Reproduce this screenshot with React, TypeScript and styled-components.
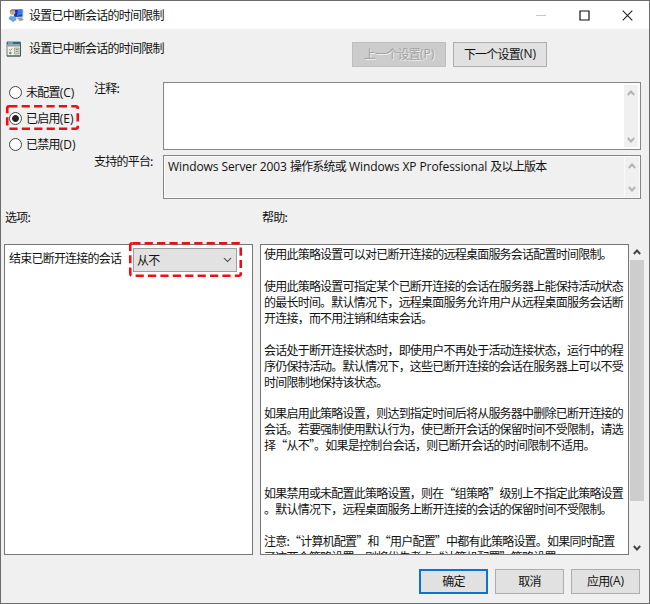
import React from "react";
import styled, { createGlobalStyle } from "styled-components";

const GlobalStyle = createGlobalStyle`
  * { box-sizing: border-box; }
  body { margin: 0; background: #f0f0f0; }
`;

const Dialog = styled.div`
  display: flex;
  flex-direction: column;
  width: 650px;
  height: 604px;
  overflow: hidden;
  border: 1px solid #6b6a6c;
  background: #f0f0f0;
  color: #111;
  font-family: "Noto Sans CJK SC", sans-serif;
  font-size: 12px;
  letter-spacing: -0.78px;
  line-height: 16px;
  white-space: nowrap;
`;

const Latin = styled.span<{ $spacing?: number }>`
  font-family: "Open Sans", "Noto Sans", sans-serif;
  letter-spacing: ${(p) => p.$spacing ?? 0}px;
  line-height: 1;
`;

const TitleBar = styled.header`
  display: flex;
  align-items: center;
  height: 28px;
  flex: none;
  padding-left: 7px;
  background: #fff;
`;

const TitleText = styled.span`
  flex: 1;
  margin-left: 4px;
`;

const WindowControls = styled.div`
  display: flex;
  gap: 32px;
  padding-right: 16px;
  svg { display: block; }
`;

const Header = styled.div`
  display: flex;
  align-items: flex-start;
  height: 53px;
  flex: none;
  padding: 13px 102px 0 5px;
`;

const HeaderTitle = styled.div`
  display: flex;
  flex: 1;
  gap: 7px;
  margin-top: -2px;
  svg { margin-top: 1px; }
`;

const Button = styled.button<{ $width: number; $kind?: "primary" | "disabled" }>`
  display: flex;
  align-items: center;
  justify-content: center;
  width: ${(p) => p.$width}px;
  height: 25px;
  padding: 0 0 1px;
  margin: 0;
  font: inherit;
  letter-spacing: inherit;
  border: ${(p) =>
    p.$kind === "primary" ? "2px solid #0a74d4" : p.$kind === "disabled" ? "1px solid #bfbfbf" : "1px solid #adadad"};
  background: ${(p) => (p.$kind === "disabled" ? "#cccccc" : "#e1e1e1")};
  color: ${(p) => (p.$kind === "disabled" ? "#a2a2a2" : "#111")};
  text-shadow: ${(p) => (p.$kind === "disabled" ? "1px 1px 0 #eeeeee" : "none")};
`;

const HeaderButtons = styled.div`
  display: flex;
  gap: 7px;
`;

const Settings = styled.section`
  display: grid;
  grid-template-columns: 85px 69px 478px;
  height: 118px;
  flex: none;
  padding-left: 8px;
`;

const RadioList = styled.div`
  display: flex;
  flex-direction: column;
  gap: 10.2px;
  padding-top: 2px;
`;

const RadioRow = styled.label`
  position: relative;
  display: flex;
  align-items: center;
  height: 16px;
  gap: 4px;
`;

const RadioMark = styled.span<{ $checked?: boolean }>`
  width: 13px;
  height: 13px;
  border: 1px solid #444;
  border-radius: 50%;
  background: ${(p) => (p.$checked ? "radial-gradient(circle, #222 0 3px, #fff 3.8px)" : "#fff")};
`;

const Highlight = styled.svg<{ $left: number; $top: number }>`
  position: absolute;
  left: ${(p) => p.$left}px;
  top: ${(p) => p.$top}px;
  overflow: visible;
  pointer-events: none;
`;

const FieldLabels = styled.div`
  display: flex;
  flex-direction: column;
  gap: 57px;
  margin-top: -2px;
`;

const Fields = styled.div`
  display: flex;
  flex-direction: column;
  gap: 5px;
`;

const Field = styled.div<{ $height: number; $readOnly?: boolean }>`
  display: flex;
  justify-content: space-between;
  height: ${(p) => p.$height}px;
  padding: 2px 2px 2px 4px;
  border: 1px solid #868686;
  background: ${(p) => (p.$readOnly ? "#f0f0f0" : "#fff")};
  box-shadow: inset 0 0 0 1px #fafafa;
`;

const FieldText = styled.span`
  padding-top: 0;
`;

const FieldScroll = styled.div<{ $line?: boolean }>`
  display: flex;
  flex-direction: column;
  justify-content: space-between;
  align-items: center;
  width: 14px;
  padding: 5px 0 4px;
  background: #f0f0f0;
  border-left: ${(p) => (p.$line ? "1px solid #fafafa" : "0")};
`;

const PanelLabels = styled.div`
  display: flex;
  height: 44px;
  flex: none;
  padding: 9px 0 0 4px;
  > span:first-child { width: 257px; }
`;

const Panels = styled.section`
  display: flex;
  height: 311px;
  flex: none;
  padding-left: 3px;
`;

const Panel = styled.div<{ $width: number }>`
  width: ${(p) => p.$width}px;
  height: 311px;
  border: 1px solid #777;
  background: #fff;
`;

const OptionsPanel = styled(Panel)`
  margin-right: 7px;
`;

const OptionRow = styled.div`
  position: relative;
  display: flex;
  padding: 3px 0 0 4px;
`;

const OptionLabel = styled.span`
  width: 124px;
  padding-top: 2px;
`;

const Select = styled.div`
  display: flex;
  align-items: center;
  justify-content: space-between;
  width: 104px;
  height: 24px;
  padding: 0 4px 0 3px;
  border: 1px solid #9f9f9f;
  background: #e2e2e2;
`;

const HelpPanel = styled(Panel)`
  padding: 1px 0 0 3px;
  overflow: hidden;
`;

const HelpLine = styled.div`
  height: 15.94px;
  line-height: 16px;
`;

const HelpScroll = styled.div`
  display: flex;
  flex-direction: column;
  align-items: center;
  width: 14px;
  height: 311px;
  padding: 5px 0 4px;
  margin-left: 1px;
`;

const Thumb = styled.div`
  width: 14px;
  height: 241px;
  margin: 5px 0 auto;
  background: #cdcdcd;
`;

const Footer = styled.footer`
  display: flex;
  justify-content: flex-end;
  gap: 7px;
  padding: 14px 9px 0 0;
`;

type ChevronProps = { up?: boolean; color?: string; width?: number; thin?: boolean };

function Chevron({ up, color = "#b3b3b3", width = 8, thin }: ChevronProps) {
  return (
    <svg width={width} height={6} viewBox="0 0 8 6" preserveAspectRatio="none">
      <path d={up ? "M.8 5 4 1.5 7.2 5" : "M.8 1 4 4.5 7.2 1"} fill="none" stroke={color} strokeWidth={thin ? 1 : 1.9} />
    </svg>
  );
}

function DashedFrame({ left, top, width, height }: { left: number; top: number; width: number; height: number }) {
  return (
    <Highlight $left={left} $top={top} width={width} height={height}>
      <rect
        x="1.25"
        y="1.25"
        width={width - 2.5}
        height={height - 2.5}
        rx="2"
        fill="none"
        stroke="#f20d16"
        strokeWidth="2.6"
        strokeDasharray="8.2 4.2"
      />
    </Highlight>
  );
}

function ComputerUserIcon() {
  return (
    <svg width="17" height="15" viewBox="0 0 17 15">
      <path d="M5 1h10.5v8.5L6 10z" fill="#c9d2df" />
      <path d="M6 1.8 14.3 1.5v7L6 9z" fill="#1537b5" />
      <path d="M10 1.7h4.2v4.5L9 8z" fill="#3977ed" />
      <path d="m8 10 6-1 2 3-4 1.5z" fill="#c4c6c4" />
      <path d="m10 10.5 4-.4M11 12l4-.7" stroke="#777" strokeWidth=".7" />
      <circle cx="4.5" cy="4.2" r="2.7" fill="#c8ad88" />
      <path d="M1.8 4C1.8.3 6.8.1 7 3.2L4 3z" fill="#9a8a70" />
      <path d="M.7 11C.8 6.5 7.8 5.7 8.5 12L5 14z" fill="#67a6dc" />
      <path d="m3.4 7 1.5 2L6 7" fill="#edf7ff" />
    </svg>
  );
}

function PolicyIcon() {
  return (
    <svg width="16" height="16" viewBox="0 0 16 16">
      <path d="M1 1h13.5v14H1z" fill="#f4f2e6" stroke="#6c7a78" />
      <path d="M1 1h13.5v2.5H1z" fill="#2e6a88" />
      <path d="M2 2h5" stroke="#b9dad7" />
      <path d="M1.5 4.6h12.8" stroke="#8fa39c" strokeWidth="1.8" />
      <path d="M8.5 7h4.5v6H8.5z" fill="#dcd9c0" stroke="#8e9785" strokeWidth=".7" />
      <path d="M9.8 8.5h2M9.8 10.5h2" stroke="#63756c" strokeWidth=".7" />
      <path d="m3 8.4 1.3 1.1L6.5 7.4" fill="none" stroke="#7d907c" />
      <circle cx="4.3" cy="12" r="1.3" fill="#8a8d5b" />
      <path d="M14.5 3v12H1" fill="none" stroke="#34565f" />
    </svg>
  );
}

const helpLines = [
  "使用此策略设置可以对已断开连接的远程桌面服务会话配置时间限制。",
  "",
  "使用此策略设置可指定某个已断开连接的会话在服务器上能保持活动状态",
  "的最长时间。默认情况下，远程桌面服务允许用户从远程桌面服务会话断",
  "开连接，而不用注销和结束会话。",
  "",
  "会话处于断开连接状态时，即使用户不再处于活动连接状态，运行中的程",
  "序仍保持活动。默认情况下，这些已断开连接的会话在服务器上可以不受",
  "时间限制地保持该状态。",
  "",
  "如果启用此策略设置，则达到指定时间后将从服务器中删除已断开连接的",
  "会话。若要强制使用默认行为，使已断开会话的保留时间不受限制，请选",
  "择“从不”。如果是控制台会话，则已断开会话的时间限制不适用。",
  "",
  "",
  "如果禁用或未配置此策略设置，则在“组策略”级别上不指定此策略设置",
  "。默认情况下，远程桌面服务上断开连接的会话的保留时间不受限制。",
  "",
  "注意:“计算机配置”和“用户配置”中都有此策略设置。如果同时配置",
  "了这两个策略设置，则将优先考虑“计算机配置”策略设置。",
];

export default function App() {
  return (
    <>
      <GlobalStyle />
      <Dialog lang="zh-CN">
        <TitleBar>
          <ComputerUserIcon />
          <TitleText>设置已中断会话的时间限制</TitleText>
          <WindowControls>
            <svg width="11" height="11"><path d="M0 5.5h10" stroke="#c8c8c8" /></svg>
            <svg width="11" height="11"><path d="M1 1h9v9H1z" fill="none" stroke="#111" strokeWidth="1.2" /></svg>
            <svg width="11" height="11"><path d="m.7.7 9.6 9.6m0-9.6L.7 10.3" stroke="#222" strokeWidth="1.1" /></svg>
          </WindowControls>
        </TitleBar>
        <Header>
          <HeaderTitle>
            <PolicyIcon />
            <span>设置已中断会话的时间限制</span>
          </HeaderTitle>
          <HeaderButtons>
            <Button $width={94} $kind="disabled" disabled>上一个设置<Latin>(P)</Latin></Button>
            <Button $width={94}>下一个设置<Latin>(N)</Latin></Button>
          </HeaderButtons>
        </Header>
        <Settings>
          <RadioList>
            <RadioRow><RadioMark /><span>未配置<Latin>(C)</Latin></span></RadioRow>
            <RadioRow>
              <RadioMark $checked /><span>已启用<Latin>(E)</Latin></span>
              <DashedFrame left={-3} top={-5} width={73} height={25} />
            </RadioRow>
            <RadioRow><RadioMark /><span>已禁用<Latin>(D)</Latin></span></RadioRow>
          </RadioList>
          <FieldLabels>
            <span>注释:</span>
            <span>支持的平台:</span>
          </FieldLabels>
          <Fields>
            <Field $height={68}>
              <span />
              <FieldScroll><Chevron up /><Chevron /></FieldScroll>
            </Field>
            <Field $height={44} $readOnly>
              <FieldText>
                <Latin $spacing={-0.09}>Windows Server 2003 </Latin>操作系统或<Latin $spacing={-0.09}> Windows XP Professional </Latin>及以上版本
              </FieldText>
              <FieldScroll $line><Chevron up /><Chevron /></FieldScroll>
            </Field>
          </Fields>
        </Settings>
        <PanelLabels><span>选项:</span><span>帮助:</span></PanelLabels>
        <Panels>
          <OptionsPanel $width={249}>
            <OptionRow>
              <OptionLabel>结束已断开连接的会话</OptionLabel>
              <Select><span>从不</span><Chevron color="#444" width={9} thin /></Select>
              <DashedFrame left={124} top={-3} width={113} height={35} />
            </OptionRow>
          </OptionsPanel>
          <HelpPanel $width={369}>
            {helpLines.map((line, i) => <HelpLine key={i}>{line}</HelpLine>)}
          </HelpPanel>
          <HelpScroll><Chevron up color="#444" /><Thumb /><Chevron color="#444" /></HelpScroll>
        </Panels>
        <Footer>
          <Button $width={69} $kind="primary">确定</Button>
          <Button $width={69}>取消</Button>
          <Button $width={69}>应用<Latin>(A)</Latin></Button>
        </Footer>
      </Dialog>
    </>
  );
}
